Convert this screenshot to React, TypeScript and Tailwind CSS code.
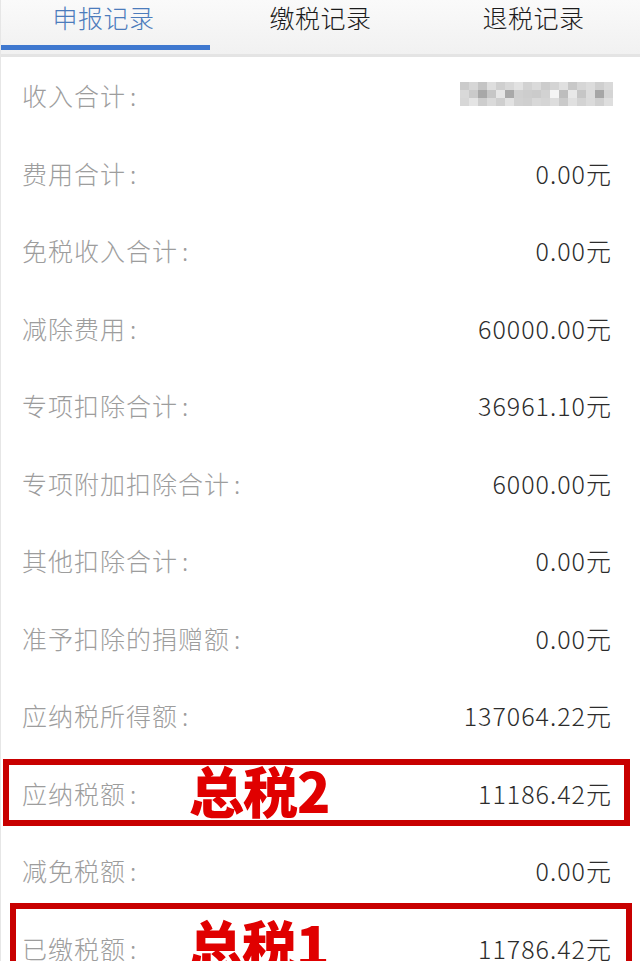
import React from 'react'

const rows = [
  { label: '收入合计', value: null },
  { label: '费用合计', value: '0.00元' },
  { label: '免税收入合计', value: '0.00元' },
  { label: '减除费用', value: '60000.00元' },
  { label: '专项扣除合计', value: '36961.10元' },
  { label: '专项附加扣除合计', value: '6000.00元' },
  { label: '其他扣除合计', value: '0.00元' },
  { label: '准予扣除的捐赠额', value: '0.00元' },
  { label: '应纳税所得额', value: '137064.22元' },
  { label: '应纳税额', value: '11186.42元', mark: '总税2' },
  { label: '减免税额', value: '0.00元' },
  { label: '已缴税额', value: '11786.42元', mark: '总税1' },
]

const shades = [
  'cbcbcb', 'd6d6d6', 'c4c4c4', 'dedede', 'cfcfcf', 'd8d8d8', 'e2e2e2', 'd2d2d2', 'dadada', 'cccccc', 'd4d4d4', 'e0e0e0', 'c8c8c8', 'd6d6d6', 'dcdcdc', 'cfcfcf', 'd9d9d9',
  'd9d9d9', 'cacaca', 'a8a8a8', 'c6c6c6', 'e6e6e6', 'a9a9a9', 'd0d0d0', 'cdcdcd', 'cbcbcb', 'd2d2d2', 'f4f4f4', 'bdbdbd', 'e8e8e8', 'c6c6c6', 'dcdcdc', 'a6a6a6', 'd4d4d4',
  'd7d7d7', 'e4e4e4', 'cdcdcd', 'dadada', 'cfcfcf', 'e2e2e2', 'd1d1d1', 'cfcfcf', 'd8d8d8', 'd5d5d5', 'dddddd', 'cacaca', 'e0e0e0', 'd3d3d3', 'dbdbdb', 'd0d0d0', 'dedede',
]

function Mosaic() {
  return (
    <div className="grid grid-cols-[repeat(17,9px)] grid-rows-[repeat(3,8px)] mr-[-2px] mt-[-4px]">
      {shades.map((c, i) => (
        <div key={i} style={{ backgroundColor: `#${c}` }} />
      ))}
    </div>
  )
}

export default function App() {
  return (
    <div
      className="w-[640px] h-[961px] overflow-hidden bg-white border-l border-[#e6e6e6]"
      style={{ fontFamily: '"Noto Sans CJK SC", "Noto Sans", sans-serif' }}
    >
      {/* Tabs */}
      <div className="h-[57px] bg-gradient-to-b from-[#fafafa] to-[#f1f1f1] border-b-[3px] border-[#e4e4e4] flex items-start">
        {['申报记录', '缴税记录', '退税记录'].map((t, i) => (
          <div key={t} className="relative flex-1 h-full flex justify-center">
            <span className={`text-[25px] leading-[34px] tracking-[0.5px] font-light ${i === 0 ? 'mr-[8px] text-[#4c7cbc]' : 'text-[#1c1c1c]'}`}>{t}</span>
            {i === 0 && <div className="absolute left-[-1px] w-[210px] top-[45px] h-[5px] bg-[#3f78cf]" />}
          </div>
        ))}
      </div>

      {/* Rows */}
      <div className="flex flex-col">
        {rows.map((r) => (
          <div key={r.label} className="relative h-[77.5px] flex items-center justify-between pl-[21px] pr-[29px]">
            <span className="text-[25px] tracking-[1px] font-light text-[#9d9d9d]">
              {r.label}
              <span className="ml-[4px]">:</span>
            </span>
            {r.value ? (
              <span className="text-[25px] font-light text-[#2c2c2c] tracking-[1px] mr-[-1px]">{r.value}</span>
            ) : (
              <Mosaic />
            )}
            {r.mark === '总税2' && (
              <div className="absolute left-[2px] right-[10px] top-[4px] bottom-[6px] border-[6px] border-[#c80000]">
                <span className="absolute left-[180px] top-[-8px] text-[55px] leading-[64px] font-black text-[#e00000] tracking-[-1px]">{r.mark}</span>
              </div>
            )}
            {r.mark === '总税1' && (
              <div className="absolute left-[9px] right-[8px] top-[-7px] bottom-[-30px] border-[6px] border-[#c80000]">
                <span className="absolute left-[172px] top-[2px] text-[55px] leading-[64px] font-black text-[#e00000] tracking-[-1px]">{r.mark}</span>
              </div>
            )}
          </div>
        ))}
      </div>
    </div>
  )
}
